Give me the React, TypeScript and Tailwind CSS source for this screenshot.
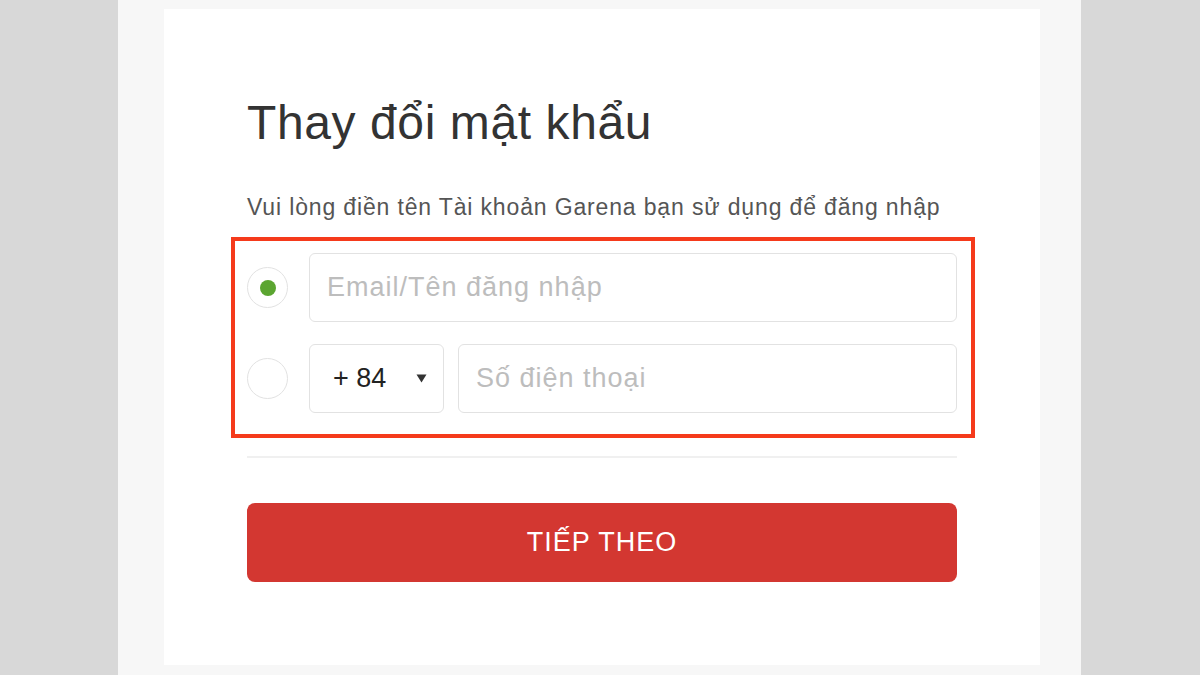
import React from "react";

export default function App() {
  return (
    <div
      className="w-full h-[675px] bg-[#d8d8d8] flex overflow-hidden"
      style={{ fontFamily: '"Liberation Sans", Arial, sans-serif' }}
    >
      <div className="ml-[118px] w-[963px] h-full bg-[#f7f7f7] pl-[46px] pt-[9px]">
        <div className="w-[876px] h-[656px] bg-white px-[83px] pt-[90px]">
          <h1 className="text-[48px] leading-none tracking-[0.6px] text-[#333333] font-normal">
            Thay đổi mật khẩu
          </h1>
          <p className="mt-[49px] text-[23px] leading-none tracking-[0.85px] text-[#555555]">
            Vui lòng điền tên Tài khoản Garena bạn sử dụng để đăng nhập
          </p>
          <div className="mt-[18px] -ml-[16px] -mr-[18px] border-[4px] border-[#f53a1b] pl-[12px] pr-[14px] pt-[12px] pb-[21px] flex flex-col gap-[22px]">
            <div className="flex items-center gap-[21px]">
              <div className="w-[41px] h-[41px] rounded-full border border-[#e2e2e2] flex items-center justify-center shrink-0">
                <div className="w-[16px] h-[16px] rounded-full bg-[#5ba531]" />
              </div>
              <div className="flex-1 h-[69px] rounded-[6px] border border-[#e2e2e2] flex items-center px-[17px] text-[27px] tracking-[1px] text-[#bdbdbd]">
                Email/Tên đăng nhập
              </div>
            </div>
            <div className="flex items-center gap-[21px]">
              <div className="w-[41px] h-[41px] rounded-full border border-[#e2e2e2] shrink-0" />
              <div className="flex-1 flex gap-[14px]">
                <div className="w-[135px] h-[69px] rounded-[6px] border border-[#e2e2e2] flex items-center pl-[23px] pr-[16px] justify-between">
                  <span className="text-[27px] text-[#222222]">+ 84</span>
                  <svg width="11" height="9" viewBox="0 0 11 9">
                    <path d="M0.5 0.5 L10.5 0.5 L5.5 8.5 Z" fill="#333333" />
                  </svg>
                </div>
                <div className="flex-1 h-[69px] rounded-[6px] border border-[#e2e2e2] flex items-center px-[17px] text-[27px] tracking-[1px] text-[#bdbdbd]">
                  Số điện thoại
                </div>
              </div>
            </div>
          </div>
          <div className="mt-[18px] h-[2px] bg-[#f0f0f0]" />
          <button className="mt-[45px] w-full h-[79px] rounded-[8px] bg-[#d33731] text-white text-[27px] tracking-[1px] flex items-center justify-center">
            TIẾP THEO
          </button>
        </div>
      </div>
    </div>
  );
}
